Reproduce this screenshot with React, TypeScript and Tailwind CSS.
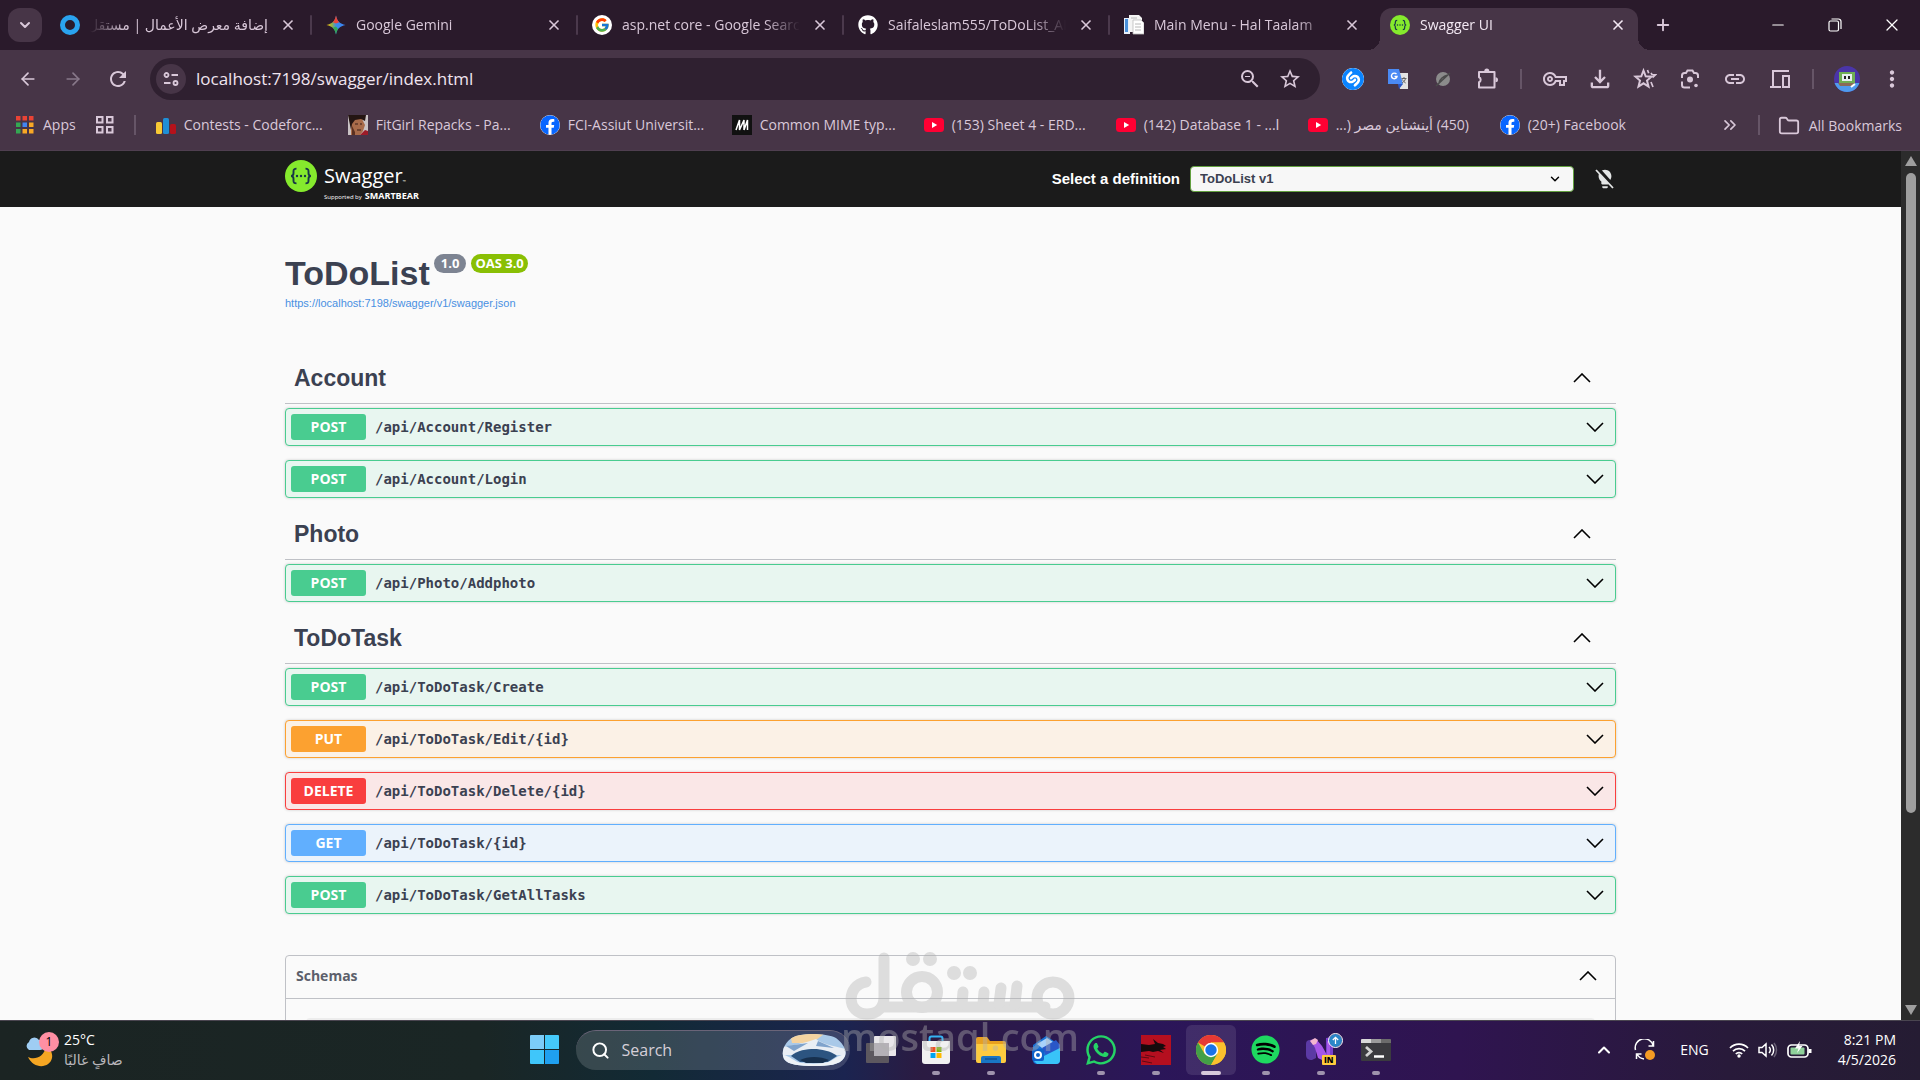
import React from 'react';
import { ArrowLeft, ArrowRight, ChevronDown, ChevronUp, ChevronsRight, Folder, Minus, Plus, Search, X } from 'lucide-react';
import { FcGoogle } from 'react-icons/fc';
import { FaFacebook, FaGithub, FaSpotify, FaWhatsapp } from 'react-icons/fa';
import { SiShazam } from 'react-icons/si';
import {
  MdLightbulb, MdMoreVert, MdOutlineFileDownload, MdOutlineVpnKey,
  MdLink, MdRefresh, MdStarBorder, MdZoomOut
} from 'react-icons/md';
import { clsx } from 'clsx';

type Method = 'POST' | 'PUT' | 'DELETE' | 'GET';

const SwaggerMark = ({ className }: { className: string }) => (
  <svg viewBox="0 0 32 32" className={className}>
    <circle cx="16" cy="16" r="16" fill="#85ea2d" />
    <g fill="none" stroke="#173647" strokeWidth="1.9">
      <path d="M11.5 8.6c-2.6 0-3 .8-3 2.600v2c0 1.700-.6 2.500-2.300 2.800 1.700.3 2.300 1.100 2.300 2.800v2c0 1.800.4 2.600 3 2.600" />
      <path d="M20.500 8.600c2.600 0 3 .8 3 2.600v2c0 1.700.6 2.500 2.300 2.800-1.700.3-2.300 1.100-2.300 2.800v2c0 1.800-.4 2.600-3 2.600" />
    </g>
    <g fill="#173647">
      <circle cx="12" cy="16" r="1.200" />
      <circle cx="16" cy="16" r="1.200" />
      <circle cx="20" cy="16" r="1.200" />
    </g>
  </svg>
);

const Arrow = ({ up, className }: { up?: boolean; className?: string }) => (
  <svg viewBox="0 0 18 10" className={clsx('h-[10px] w-[18px] text-black', className)} fill="none" stroke="currentColor" strokeWidth="1.600">
    <path d={up ? 'M1 9l8-8 8 8' : 'M1 1l8 8 8-8'} />
  </svg>
);

const GeminiIcon = () => (
  <svg viewBox="0 0 20 20" className="size-5">
    <defs>
      <linearGradient id="gem" x1="0" y1="0" x2="1" y2="0">
        <stop offset="0" stopColor="#fbbc04" />
        <stop offset="0.300" stopColor="#8fb04a" />
        <stop offset="0.500" stopColor="#3b8be8" />
        <stop offset="1" stopColor="#3b82f6" />
      </linearGradient>
    </defs>
    <path d="M10 .5c1 5.500 4 8.500 9.500 9.500-5.500 1-8.500 4-9.500 9.500C9 14 6 11 .5 10 6 9 9 6 10 .5z" fill="url(#gem)" />
    <path d="M10 .5c.6 3 1.600 5.200 3.200 6.700L10 8.500 6.800 7.200C8.400 5.700 9.400 3.500 10 .5z" fill="#ea4335" />
    <path d="M10 19.500c-.6-3-1.600-5.200-3.200-6.700L10 11.500l2 2.500c-1 1.500-1.600 3.300-2 5.500z" fill="#34a853" />
  </svg>
);

const PagesIcon = () => (
  <svg viewBox="0 0 20 20" className="size-5">
    <path d="M0 3h6v16H0z" fill="#e8f0fa" />
    <path d="M1 4h3v13H1z" fill="#4a90d9" />
    <path d="M5 0h10l3 3v14H5z" fill="#f4f4f4" />
    <path d="M9 5h8l3 3v11H9z" fill="#fff" stroke="#bbb" strokeWidth="0.800" />
    <path d="M7 3h6M11 9h6M11 12h6M11 15h6" stroke="#b8b8b8" />
  </svg>
);

const YoutubeIcon = () => (
  <svg viewBox="0 0 20 20" className="size-5">
    <rect y="3" width="20" height="14" rx="3.500" fill="#ff0033" />
    <path d="M8 7l5.200 3L8 13z" fill="#fff" />
  </svg>
);

const CodeforcesIcon = () => (
  <svg viewBox="0 0 20 20" className="size-5">
    <rect x="0" y="7" width="6" height="12" rx="1.500" fill="#f8c934" />
    <rect x="7" y="3" width="6" height="16" rx="1.500" fill="#1f8fd6" />
    <rect x="14" y="9" width="6" height="10" rx="1.500" fill="#b5121b" />
  </svg>
);

const PortraitIcon = () => (
  <svg viewBox="0 0 20 20" className="size-5">
    <rect width="20" height="20" fill="#c9c2c4" />
    <path d="M3 20V8l4-5 7 1 3 6-2 6-3 4z" fill="#a86b4a" />
    <path d="M0 0h18l-1 6-4-2-6 1-3 4-1 6z" fill="#241512" />
    <path d="M7 9h3M12 9h2M9 15h4" stroke="#3b1e16" />
    <path d="M4 20V11l3 6v3z" fill="#5b3020" />
    <path d="M12 20l5-5 3 1v4z" fill="#9c1c28" />
  </svg>
);

const MdnIcon = () => (
  <svg viewBox="0 0 20 20" className="size-5">
    <rect width="20" height="20" fill="#111" />
    <path d="M4 15L7.500 5v10L12 5v10M12 15l3.500-10v10" fill="none" stroke="#fff" strokeWidth="1.500" />
  </svg>
);

const AppsIcon = () => (
  <svg viewBox="0 0 18 18" className="size-[18px]">
    {['#ea4335', '#ea4335', '#ea4335', '#34a853', '#4285f4', '#f9a825', '#34a853', '#f9a825', '#f9a825'].map((c, i) => (
      <rect key={i} x={(i % 3) * 6.5} y={Math.floor(i / 3) * 6.5} width="4.500" height="4.500" fill={c} />
    ))}
  </svg>
);

const TranslateIcon = () => (
  <svg viewBox="0 0 22 22" className="size-[22px]">
    <path d="M9 5h12v16H13z" fill="#e3e3e3" />
    <path d="M1 1h11l4 15H1z" fill="#4a8af4" />
    <path d="M12 21l4-5h-5z" fill="#2a56c6" />
    <path d="M9.500 6.200A2.800 2.800 0 1 0 10 8.500H7.500" fill="none" stroke="#fff" strokeWidth="1.400" />
    <path d="M14.500 10.500h5M17 9v1.500M18.500 10.500c-.5 2-1.500 3.500-3.500 4.500M15.500 11.500c.6 1.500 1.600 2.700 3.200 3.500" fill="none" stroke="#666" />
  </svg>
);

const PlanetIcon = () => (
  <svg viewBox="0 0 16 16" className="size-4">
    <circle cx="8" cy="8" r="7" fill="#8b8b8b" />
    <path d="M1 15L15 2M4 12c1-4 5-7 9-8" fill="none" stroke="#4a4a4a" strokeWidth="1.500" />
  </svg>
);

const PuzzleIcon = () => (
  <svg viewBox="0 0 24 24" className="size-6" fill="none" stroke="currentColor" strokeWidth="2">
    <path d="M3 5h15.500v15.500H3v-5.300a2.700 2.700 0 0 0 0-5z" strokeLinejoin="round" />
    <path d="M8.300 4a2.500 2.500 0 0 1 5 0zM19.500 10.300a2.500 2.500 0 0 1 0 5z" fill="currentColor" stroke="none" />
  </svg>
);

const StarsIcon = () => (
  <svg viewBox="0 0 24 24" className="size-6" fill="none" stroke="currentColor" strokeWidth="2">
    <path d="M10.500 3.500l2.200 5.800 5.800.4-4.500 3.900 1.500 6-5-3.300-5 3.300 1.500-6-4.500-3.900 5.800-.4z" />
    <path d="M14.500 3l1.200 3.200M18 6l1 1.500 3.500.3-3 2.700M18 15l2 5" strokeWidth="1.700" />
  </svg>
);

const LensIcon = () => (
  <svg viewBox="0 0 24 24" className="size-6" fill="none" stroke="currentColor" strokeWidth="2">
    <path d="M4 11V8.500A2.500 2.500 0 0 1 6.500 6H8l1.500-2.500h5L16 6h1.500A2.500 2.500 0 0 1 20 8.500V11M4 14.500V18a2.500 2.500 0 0 0 2.500 2.500H12" />
    <circle cx="12" cy="12.500" r="3" fill="currentColor" stroke="none" />
    <circle cx="18" cy="18.500" r="1.800" fill="currentColor" stroke="none" />
  </svg>
);

const DevicesIcon = () => (
  <svg viewBox="0 0 24 24" className="size-6" fill="none" stroke="currentColor" strokeWidth="2">
    <path d="M21 4H5v15M2 20h11" />
    <rect x="15" y="9" width="6" height="11" />
  </svg>
);

const AvatarIcon = () => (
  <svg viewBox="0 0 26 26" className="size-[26px]">
    <defs>
      <clipPath id="av"><circle cx="13" cy="13" r="13" /></clipPath>
    </defs>
    <g clipPath="url(#av)">
      <rect width="26" height="26" fill="#4a35a8" />
      <path d="M0 17h26v9H0z" fill="#4f9bee" />
      <path d="M5 6h16v11H5z" fill="#6fae55" />
      <path d="M8 8h10v7H8z" fill="#e6eef0" />
      <path d="M10 10h2v3h-2zM14 10h2v3h-2z" fill="#222" />
      <path d="M4 17h17l-2 3H6z" fill="#8a6b58" />
      <path d="M17 21l4-3" stroke="#fff" strokeWidth="2" />
    </g>
  </svg>
);

const tabs = [
  { title: 'إضافة معرض الأعمال | مستقل', rtl: true, icon: <svg viewBox="0 0 20 20" className="size-5"><circle cx="10" cy="10" r="7.500" fill="none" stroke="#2aa3ef" strokeWidth="5" /></svg> },
  { title: 'Google Gemini', icon: <GeminiIcon /> },
  { title: 'asp.net core - Google Search', icon: <span className="flex size-5 items-center justify-center rounded-full bg-white"><FcGoogle size={16} /></span> },
  { title: 'Saifaleslam555/ToDoList_API', icon: <FaGithub size={20} className="text-white" /> },
  { title: 'Main Menu - Hal Taalam', icon: <PagesIcon /> },
  { title: 'Swagger UI', active: true, icon: <SwaggerMark className="size-5" /> },
];

const facebook = <FaFacebook size={20} className="rounded-full bg-white text-[#0866ff]" />;

const bookmarks = [
  { name: 'Contests - Codeforc...', icon: <CodeforcesIcon /> },
  { name: 'FitGirl Repacks - Pa...', icon: <PortraitIcon /> },
  { name: 'FCI-Assiut Universit...', icon: facebook },
  { name: 'Common MIME typ...', icon: <MdnIcon /> },
  { name: '(153) Sheet 4 - ERD...', icon: <YoutubeIcon /> },
  { name: '(142) Database 1 - ...ا', icon: <YoutubeIcon /> },
  { name: '(450) أينشتاين مصر (...', rtl: true, icon: <YoutubeIcon /> },
  { name: '(20+) Facebook', icon: facebook },
];

const toolbarActions = [
  { label: 'Shazam', icon: <SiShazam size={22} className="rounded-full bg-white text-[#0a84ff]" /> },
  { label: 'Translate', icon: <TranslateIcon /> },
  { label: 'Proxy', icon: <PlanetIcon /> },
  { label: 'Extensions', icon: <PuzzleIcon /> },
];

const toolbarShortcuts = [
  { label: 'Passwords', icon: <MdOutlineVpnKey size={24} /> },
  { label: 'Downloads', icon: <MdOutlineFileDownload size={28} /> },
  { label: 'Bookmarks', icon: <StarsIcon /> },
  { label: 'Lens', icon: <LensIcon /> },
  { label: 'Copy link', icon: <MdLink size={24} /> },
  { label: 'Send to devices', icon: <DevicesIcon /> },
];

const sections: { name: string; operations: { method: Method; path: string }[] }[] = [
  {
    name: 'Account',
    operations: [
      { method: 'POST', path: '/api/Account/Register' },
      { method: 'POST', path: '/api/Account/Login' },
    ],
  },
  { name: 'Photo', operations: [{ method: 'POST', path: '/api/Photo/Addphoto' }] },
  {
    name: 'ToDoTask',
    operations: [
      { method: 'POST', path: '/api/ToDoTask/Create' },
      { method: 'PUT', path: '/api/ToDoTask/Edit/{id}' },
      { method: 'DELETE', path: '/api/ToDoTask/Delete/{id}' },
      { method: 'GET', path: '/api/ToDoTask/{id}' },
      { method: 'POST', path: '/api/ToDoTask/GetAllTasks' },
    ],
  },
];

const methodStyles: Record<Method, { row: string; badge: string }> = {
  POST: { row: 'border-[#49cc90] bg-[#e8f6f0]', badge: 'bg-[#49cc90]' },
  PUT: { row: 'border-[#fca130] bg-[#fbf1e6]', badge: 'bg-[#fca130]' },
  DELETE: { row: 'border-[#f93e3e] bg-[#fae7e7]', badge: 'bg-[#f93e3e]' },
  GET: { row: 'border-[#61affe] bg-[#ebf3fb]', badge: 'bg-[#61affe]' },
};

function TabStrip() {
  return (
    <div className="flex h-[50px] shrink-0 bg-[#2a1a2b] pl-2 text-[#d9c8d9]">
      <button aria-label="Search tabs" className="mt-2 mr-1 flex size-[34px] shrink-0 items-center justify-center rounded-xl bg-[#473547]">
        <ChevronDown size={16} strokeWidth={3} />
      </button>
      {tabs.map((tab, i) => (
        <div key={tab.title} className="relative flex min-w-0 max-w-[266px] flex-1 pt-2">
          {tab.active && (
            <>
              <span className="absolute bottom-0 -left-2 size-3 bg-[radial-gradient(circle_at_0_0,transparent_12px,#473547_12px)]" />
              <span className="absolute -right-2 bottom-0 size-3 bg-[radial-gradient(circle_at_100%_0,transparent_12px,#473547_12px)]" />
            </>
          )}
          <div
            className={clsx(
              'flex min-w-0 flex-1 items-center pb-2',
              tab.active && 'mx-1 rounded-t-xl bg-[#473547] pr-3 pl-[10px] text-[#f3e8f3]',
              !tab.active && 'pr-4 pl-[14px]'
            )}
          >
            <span className="shrink-0">{tab.icon}</span>
            <span
              dir={tab.rtl ? 'rtl' : 'ltr'}
              className={clsx(
                'ml-[10px] min-w-0 flex-1 overflow-hidden text-sm whitespace-nowrap',
                tab.rtl ? '[mask-image:linear-gradient(to_left,black_80%,transparent)]' : '[mask-image:linear-gradient(to_right,black_80%,transparent)]'
              )}
            >
              {tab.title}
            </span>
            <button aria-label={'Close ' + tab.title} className="ml-3 shrink-0">
              <X size={16} strokeWidth={2.500} />
            </button>
          </div>
          {i < tabs.length - 2 && <span className="absolute top-[15px] right-0 h-5 w-[2px] rounded bg-[#4b394c]" />}
        </div>
      ))}
      <button aria-label="New tab" className="ml-3"><Plus size={18} strokeWidth={2.500} /></button>
      <div className="ml-auto flex text-white">
        <button aria-label="Minimize" className="flex w-[57px] items-center justify-center"><Minus size={18} strokeWidth={1.500} /></button>
        <button aria-label="Restore" className="flex w-[57px] items-center justify-center">
          <svg viewBox="0 0 14 14" className="size-[14px]" fill="none" stroke="currentColor" strokeWidth="1.200">
            <rect x="1" y="3" width="9.500" height="10" rx="1.500" />
            <path d="M3.500 1h7a2.500 2.500 0 0 1 2.500 2.500V11" />
          </svg>
        </button>
        <button aria-label="Close window" className="flex w-[57px] items-center justify-center"><X size={20} strokeWidth={1.500} /></button>
      </div>
    </div>
  );
}

function Toolbar() {
  return (
    <div className="flex h-[58px] shrink-0 items-center bg-[#473547] pr-[6px] pl-[5px] text-[#d9c8d9]">
      <button aria-label="Back" className="flex w-[45px] justify-center"><ArrowLeft size={20} /></button>
      <button aria-label="Forward" className="flex w-[45px] justify-center text-[#88788a]"><ArrowRight size={20} /></button>
      <button aria-label="Reload" className="flex w-[45px] justify-center"><MdRefresh size={24} /></button>
      <div className="ml-[10px] flex h-[42px] min-w-0 flex-1 items-center rounded-full bg-[#2f2030] pr-[18px] pl-[6px]">
        <button aria-label="Site information" className="flex size-[30px] shrink-0 items-center justify-center rounded-full bg-[#473547]">
          <svg viewBox="0 0 16 16" className="size-4" fill="none" stroke="currentColor" strokeWidth="1.800">
            <circle cx="3.500" cy="4" r="2" />
            <path d="M8.500 4H15M1 12h6.500" />
            <circle cx="12.500" cy="12" r="2" />
          </svg>
        </button>
        <input aria-label="Address" defaultValue="localhost:7198/swagger/index.html" className="ml-[10px] min-w-0 flex-1 bg-transparent text-[17px] text-[#efe4ef] outline-none" />
        <button aria-label="Zoom" className="ml-3"><MdZoomOut size={24} /></button>
        <button aria-label="Bookmark this tab" className="ml-4"><MdStarBorder size={24} /></button>
      </div>
      <div className="ml-[10px] flex items-center">
        {toolbarActions.map((a) => (
          <button key={a.label} aria-label={a.label} className="flex w-[45px] justify-center">{a.icon}</button>
        ))}
        <span className="mx-[10px] h-5 w-[2px] bg-[#665567]" />
        {toolbarShortcuts.map((a) => (
          <button key={a.label} aria-label={a.label} className="flex w-[45px] justify-center">{a.icon}</button>
        ))}
        <span className="mx-[10px] h-5 w-[2px] bg-[#665567]" />
        <button aria-label="Profile" className="flex w-[45px] justify-center"><AvatarIcon /></button>
        <button aria-label="Menu" className="flex w-[45px] justify-center"><MdMoreVert size={26} /></button>
      </div>
    </div>
  );
}

function BookmarksBar() {
  return (
    <div className="flex h-[43px] shrink-0 items-start border-b border-[#4f3f50] bg-[#473547] pt-[7px] pr-[18px] pl-4 text-sm leading-5 text-[#d9c8d9]">
      <a href="#apps" className="flex shrink-0 items-center gap-[9px]"><AppsIcon />Apps</a>
      <button aria-label="Tab groups" className="ml-5 flex h-5 items-center">
        <svg viewBox="0 0 18 18" className="size-[18px]" fill="none" stroke="currentColor" strokeWidth="2">
          <rect x="1" y="1" width="5.500" height="5.500" />
          <rect x="11" y="1" width="5.500" height="5.500" />
          <rect x="1" y="11" width="5.500" height="5.500" />
          <rect x="11" y="11" width="5.500" height="5.500" />
        </svg>
      </button>
      <span className="mx-5 h-5 w-[2px] shrink-0 bg-[#665567]" />
      <div className="flex min-w-0 flex-1 overflow-hidden">
        {bookmarks.map((b) => (
          <a key={b.name} href="#bookmark" className="flex w-48 shrink-0 items-center gap-2 whitespace-nowrap">
            <span className="shrink-0">{b.icon}</span>
            <span dir={b.rtl ? 'rtl' : 'ltr'}>{b.name}</span>
          </a>
        ))}
      </div>
      <button aria-label="More bookmarks"><ChevronsRight size={20} /></button>
      <span className="mx-[18px] h-5 w-[2px] bg-[#665567]" />
      <button className="flex items-center gap-[9px] whitespace-nowrap"><Folder size={22} />All Bookmarks</button>
    </div>
  );
}

function SwaggerHeader() {
  return (
    <header className="h-14 bg-[#1b1b1b] font-['Liberation_Sans',Arial,sans-serif]">
      <div className="mx-auto flex h-full max-w-[1331px] items-start pt-[9px]">
        <a href="#home" aria-label="Swagger" className="flex gap-[7px] font-['Open_Sans',sans-serif] text-white">
          <SwaggerMark className="size-8" />
          <span className="flex flex-col pt-2">
            <span className="text-xl leading-4">Swagger<span className="text-[4px]">™</span></span>
            <span className="flex items-baseline gap-[3px] text-[6px] leading-3 whitespace-nowrap">Supported by <b className="text-[9px]">SMARTBEAR</b></span>
          </span>
        </a>
        <div className="ml-auto flex items-center pt-[6px]">
          <label htmlFor="definition" className="mr-[10px] text-[15px] font-bold text-white">Select a definition</label>
          <div className="relative flex">
            <select id="definition" className="h-[26px] w-[384px] appearance-none rounded border border-[#62a03f] bg-[#f7f7f7] pl-[9px] text-[13px] font-bold text-[#3b4151]">
              <option>ToDoList v1</option>
            </select>
            <ChevronDown size={14} strokeWidth={2.500} className="pointer-events-none absolute top-[6px] right-3 text-black" />
          </div>
          <button aria-label="Toggle dark mode" className="relative ml-5 text-[#e4e6e6]">
            <MdLightbulb size={22} />
            <svg viewBox="0 0 22 22" className="absolute inset-0 size-[22px]">
              <path d="M4 1l16 18" stroke="#1b1b1b" strokeWidth="4" />
              <path d="M2 2l17 18" stroke="#e4e6e6" strokeWidth="1.800" />
            </svg>
          </button>
        </div>
      </div>
    </header>
  );
}

function Operation({ method, path }: { method: Method; path: string }) {
  const styles = methodStyles[method];
  return (
    <button className={clsx('flex h-[38px] w-full items-center rounded border pr-[11px] pl-[5px] shadow-[0_0_3px_rgba(0,0,0,0.19)]', styles.row)}>
      <span className={clsx("w-[75px] rounded-[3px] text-center font-['Open_Sans',sans-serif] text-sm leading-[26px] font-bold text-white", styles.badge)}>{method}</span>
      <span className="ml-[9px] font-['DejaVu_Sans_Mono',monospace] text-sm font-bold text-[#3b4151]">{path}</span>
      <Arrow className="ml-auto" />
    </button>
  );
}

function SwaggerPage() {
  return (
    <div className="flex min-h-0 flex-1 overflow-hidden bg-[#fafafa]">
      <div className="min-w-0 flex-1 font-['Liberation_Sans',Arial,sans-serif] text-[#3b4151]">
        <SwaggerHeader />
        <main className="mx-auto max-w-[1331px] pt-[46px]">
          <h1 className="flex items-start text-[34px] leading-10 font-bold">
            ToDoList
            <span className="mt-[1px] ml-1 flex gap-[5px] font-['Open_Sans',sans-serif] text-[13px] leading-[19px] text-white">
              <span className="rounded-full bg-[#7d8492] px-[7px]">1.0</span>
              <span className="rounded-full bg-[#89bf04] px-1">OAS 3.0</span>
            </span>
          </h1>
          <a href="#swagger.json" className="mt-[2px] block text-[11px] leading-4 text-[#4990e2]">https://localhost:7198/swagger/v1/swagger.json</a>

          <div className="mt-[42px] flex flex-col gap-[11px]">
            {sections.map((section) => (
              <section key={section.name}>
                <h2 className="mb-1 flex h-[51px] items-center justify-between border-b border-[#bfc1c6] pr-[25px] pl-[9px] text-[23px] font-bold">
                  {section.name}
                  <button aria-label={'Collapse ' + section.name}><Arrow up className="block" /></button>
                </h2>
                <div className="flex flex-col gap-[14px]">
                  {section.operations.map((op) => <Operation key={op.path} {...op} />)}
                </div>
              </section>
            ))}
          </div>

          <section className="mt-[41px] rounded border border-[#bfc1c6]">
            <h2 className="flex h-[43px] items-center justify-between border-b border-[#bfc1c6] pr-[18px] pb-[2px] pl-[10px] font-['Open_Sans',sans-serif] text-sm font-bold text-[#5c5f6b]">
              Schemas
              <button aria-label="Collapse schemas"><Arrow up className="block" /></button>
            </h2>
            <div className="mx-5 my-[19px] h-10 rounded bg-[#ededed]" />
          </section>
        </main>
      </div>
      {/* Scrollbar */}
      <div className="flex w-[19px] flex-col items-center bg-[#2c2c2c] py-[5px]">
        <svg viewBox="0 0 12 10" className="h-[10px] w-3"><path d="M6 0l6 10H0z" fill="#9f9f9f" /></svg>
        <div className="mt-[7px] h-[640px] w-[10px] rounded-full bg-[#9f9f9f]" />
        <svg viewBox="0 0 12 10" className="mt-auto h-[10px] w-3"><path d="M0 0h12L6 10z" fill="#9f9f9f" /></svg>
      </div>
    </div>
  );
}

const ChromeIcon = () => (
  <svg viewBox="0 0 30 30" className="size-[30px]">
    <circle cx="15" cy="15" r="15" fill="#fbc02d" />
    <path d="M15 15L2 7.500A15 15 0 0 1 28 7.500H15z" fill="#e53935" />
    <path d="M2 7.500A15 15 0 0 0 15 30l6.500-11.200L15 15 8.500 18.800z" fill="#43a047" />
    <path d="M28 7.500H15l6.500 11.300L15 30A15 15 0 0 0 28 7.500z" fill="#fbc02d" />
    <circle cx="15" cy="15" r="7.200" fill="#fff" />
    <circle cx="15" cy="15" r="5.700" fill="#1a73e8" />
  </svg>
);

const taskbarApps = [
  {
    name: 'Task view',
    icon: (
      <svg viewBox="0 0 30 30" className="size-[30px]">
        <rect x="0" y="8" width="23" height="20" rx="1" fill="#5d585f" />
        <rect x="8" y="1" width="22" height="20" rx="1" fill="#e9e7ea" />
        <rect x="8" y="8" width="15" height="13" fill="#b5b1b7" />
      </svg>
    ),
  },
  {
    name: 'Microsoft Store',
    running: true,
    icon: (
      <svg viewBox="0 0 30 30" className="size-[30px]">
        <path d="M8.500 7V3.500a2 2 0 0 1 2-2h9a2 2 0 0 1 2 2V7" fill="none" stroke="#35b2f2" strokeWidth="2" />
        <path d="M1 6h28v20a3 3 0 0 1-3 3H4a3 3 0 0 1-3-3z" fill="#f1f1f1" />
        <path d="M9.500 12h5v5h-5z" fill="#f25022" />
        <path d="M15.500 12h5v5h-5z" fill="#7fba00" />
        <path d="M9.500 18h5v5h-5z" fill="#00a4ef" />
        <path d="M15.500 18h5v5h-5z" fill="#ffb900" />
      </svg>
    ),
  },
  {
    name: 'File Explorer',
    running: true,
    icon: (
      <svg viewBox="0 0 30 30" className="size-[30px]">
        <path d="M0 4a2 2 0 0 1 2-2h9l3 4h14a2 2 0 0 1 2 2v6H0z" fill="#e8a020" />
        <path d="M0 9h30v17a2 2 0 0 1-2 2H2a2 2 0 0 1-2-2z" fill="#fdcb3f" />
        <path d="M5 28v-5a2 2 0 0 1 2-2h16a2 2 0 0 1 2 2v5z" fill="#1976c5" />
        <path d="M9 24h12" stroke="#0f5595" strokeWidth="1.500" />
      </svg>
    ),
  },
  {
    name: 'Outlook',
    icon: (
      <svg viewBox="0 0 30 30" className="size-[30px]">
        <path d="M2 10L15 1l14 9v15a4 4 0 0 1-4 4H6a4 4 0 0 1-4-4z" fill="#1671d6" />
        <path d="M6 9l10-6 9 6-9 8z" fill="#a9d3fb" />
        <path d="M11 13l14-8 4 5v3L15 20z" fill="#2957c8" />
        <path d="M3 26l26-13v12a4 4 0 0 1-4 4H6z" fill="#39c3f8" />
        <rect x="1" y="14" width="12" height="12" rx="2" fill="#0f62c9" />
        <circle cx="7" cy="20" r="3" fill="none" stroke="#fff" strokeWidth="2" />
      </svg>
    ),
  },
  { name: 'WhatsApp', running: true, icon: <FaWhatsapp size={34} className="text-[#25d366]" /> },
  {
    name: 'Game',
    running: true,
    icon: (
      <svg viewBox="0 0 30 30" className="size-[30px]">
        <rect width="30" height="30" fill="#b50f1f" />
        <path d="M0 9l8 1 6-1-2-5 5 4 5 1 3 2-3 1 3 2-6 1 4 3-6-2-5 1-4-1-8 1z" fill="#170a0c" />
        <path d="M0 22l8 1M1 26l10 2M4 20l10 2" stroke="#5e0912" />
      </svg>
    ),
  },
  { name: 'Chrome', running: true, active: true, icon: <ChromeIcon /> },
  { name: 'Spotify', running: true, icon: <span className="flex size-[26px] items-center justify-center rounded-full bg-black"><FaSpotify size={29} className="shrink-0 text-[#1ed760]" /></span> },
  {
    name: 'Visual Studio',
    running: true,
    icon: (
      <span className="relative flex">
        <svg viewBox="0 0 30 30" className="size-[30px]">
          <path d="M20 3l7-1v20l-7 3z" fill="#7a3fce" />
          <path d="M0 9a4 4 0 0 1 4-4l6 9v9l-4 2c-4 0-6-2-6-5z" fill="#5b3aa5" />
          <path d="M4 5l6-1 6 7 5 9V6l3 2v14l-6 4-6-3L9 13z" fill="#a657e8" />
          <path d="M4 6l5-3 3 2-2 4-3 1z" fill="#f3b6cf" />
        </svg>
        <span className="absolute -top-px -right-[6px] flex size-[13px] items-center justify-center rounded-full bg-[#2b87c8] outline-1 outline-white">
          <svg viewBox="0 0 10 10" className="size-[9px]" fill="none" stroke="#fff" strokeWidth="1.400"><path d="M5 9V1.500M2 4.500l3-3 3 3" /></svg>
        </span>
        <span className="absolute right-0 bottom-0 rounded-[1px] bg-[#ffcb3d] px-[2px] text-[8px] leading-[10px] font-extrabold text-black">IN</span>
      </span>
    ),
  },
  {
    name: 'Terminal',
    running: true,
    icon: (
      <svg viewBox="0 0 30 30" className="size-[30px]">
        <rect y="4" width="30" height="22" rx="1" fill="#3b3b3f" />
        <path d="M0 5a1 1 0 0 1 1-1h9v4H0z" fill="#d9d9d9" />
        <path d="M10 4h10v4H10z" fill="#9b9b9b" />
        <path d="M20 4h9a1 1 0 0 1 1 1v3H20z" fill="#6b6b6b" />
        <path d="M5 12l5 4.500L5 21" fill="none" stroke="#d2d2d2" strokeWidth="2.800" />
        <path d="M13 21.500h10" stroke="#fff" strokeWidth="2.500" />
      </svg>
    ),
  },
];

function Taskbar() {
  return (
    <footer className="grid h-[60px] shrink-0 grid-cols-[1fr_auto_1fr] items-center border-t border-[#4a4550] bg-[linear-gradient(90deg,#1b2423_0%,#1a2625_25%,#122a35_34%,#1b2450_44%,#2b1b42_48%,#2b1659_60%,#2f1450_76%,#281a3a_90%,#251c33_100%)] pb-[2px] text-white">
      <button className="flex items-center justify-self-start pl-[25px] text-left">
        <span className="relative flex">
          <svg viewBox="0 0 34 36" className="h-9 w-[34px]">
            <path d="M3 25c6 3 16 1 18-11 4 2 7 7 6 12-2 10-18 12-24-1z" fill="#f5a623" />
            <path d="M4 18a4.500 4.500 0 0 1 0-8 5.500 5.500 0 0 1 10-2c4-1 6 3 5 6s-2 4-4 4z" fill="#9fcdf3" />
          </svg>
          <span className="absolute top-0 left-[14px] size-5 rounded-full bg-[#ff8fa3] text-center text-xs leading-5 text-black">1</span>
        </span>
        <span className="ml-[5px] flex flex-col text-sm leading-5">
          25°C
          <span dir="rtl" className="text-[#b9b7bb]">صافٍ غالبًا</span>
        </span>
      </button>

      <div className="flex items-center">
        <button aria-label="Start" className="mr-[6px] flex w-[50px] justify-center">
          <svg viewBox="0 0 29 29" className="size-[29px]">
            <path d="M0 1a1 1 0 0 1 1-1h13v14H0z" fill="#7ccdf8" />
            <path d="M15 0h13a1 1 0 0 1 1 1v13H15z" fill="#45cafa" />
            <path d="M0 15h14v14H1a1 1 0 0 1-1-1z" fill="#3fc6fa" />
            <path d="M15 15h14v13a1 1 0 0 1-1 1H15z" fill="#1fa0f0" />
          </svg>
        </button>
        <div className="mr-[6px] flex h-10 w-[274px] items-center rounded-full border-t border-[#6a6478] bg-white/15 pr-1 pl-[15px]">
          <Search size={19} strokeWidth={2.500} className="shrink-0" />
          <input aria-label="Search" placeholder="Search" className="ml-3 min-w-0 flex-1 bg-transparent text-base outline-none placeholder:text-[#d5cfd8]" />
          <svg viewBox="0 0 64 32" className="h-8 w-16 shrink-0">
            <defs>
              <clipPath id="pic"><path d="M14 2C24-1 44-1 54 4c8 6 12 14 8 20-4 7-16 8-30 8S6 31 2 25C-2 17 4 5 14 2z" /></clipPath>
            </defs>
            <g clipPath="url(#pic)">
              <rect width="64" height="32" fill="#a9c9e8" />
              <path d="M8 0h34l-12 9H10z" fill="#f4d3a0" />
              <path d="M0 13c14-2 22-4 34-8 6 5 14 6 30 10v6H0z" fill="#e9eef4" />
              <path d="M4 12l22-3-14 8zM36 7l16 7-18-2z" fill="#7fa3cc" />
              <path d="M9 22c6-6 16-7 23-7s17 2 23 7l-9 6H18z" fill="#2c5480" />
              <path d="M18 26c8-4 20-4 29 0l-6 3H24z" fill="#17304e" />
              <path d="M0 21c6-1 12 7 20 8s20 1 26-1 12-9 18-7v11H0z" fill="#eef2f6" />
            </g>
          </svg>
        </div>
        <div className="flex gap-[5px]">
          {taskbarApps.map((app) => (
            <button
              key={app.name}
              aria-label={app.name}
              className={clsx('relative flex size-[50px] items-center justify-center rounded-md', app.active && 'bg-white/10')}
            >
              {app.icon}
              {app.running && (
                <span className={clsx('absolute bottom-0 h-1 rounded-full', app.active ? 'w-5 bg-[#d7c8dc]' : 'w-2 bg-[#9f93ad]')} />
              )}
            </button>
          ))}
        </div>
      </div>

      <div className="flex items-center justify-self-end pr-6 text-sm">
        <button aria-label="Hidden icons"><ChevronUp size={20} strokeWidth={2.500} /></button>
        <button aria-label="Updates" className="ml-5">
          <svg viewBox="0 0 22 22" className="block size-[22px]" fill="none" stroke="currentColor" strokeWidth="1.500">
            <path d="M1.500 11A9 9 0 0 1 19 6.500M19.500 2v5h-5M2.500 20v-5h5M3 15a9 9 0 0 0 7 5" />
            <circle cx="16" cy="16" r="5" fill="#f59b23" stroke="none" />
          </svg>
        </button>
        <button className="mr-5 ml-6">ENG</button>
        <button aria-label="Network, volume and battery" className="flex items-center gap-[9px]">
          <svg viewBox="0 0 20 16" className="h-4 w-5" fill="none" stroke="currentColor" strokeWidth="1.700">
            <path d="M1 6a12.500 12.500 0 0 1 18 0M4 9.200a8.300 8.300 0 0 1 12 0M6.800 12a4.500 4.500 0 0 1 6.400 0" />
            <circle cx="10" cy="14" r="1.700" fill="currentColor" stroke="none" />
          </svg>
          <svg viewBox="0 0 20 16" className="h-4 w-5" fill="none" stroke="currentColor" strokeWidth="1.500">
            <path d="M1 5.500h3L8 2v12l-4-3.500H1zM11 5a4 4 0 0 1 0 6M13.500 2.500a8 8 0 0 1 0 11" />
            <path d="M16 1a11 11 0 0 1 0 14" opacity="0.300" />
          </svg>
          <svg viewBox="0 0 25 18" className="h-[18px] w-[25px]" fill="none" stroke="currentColor" strokeWidth="1.700">
            <rect x="1" y="4" width="20" height="12" rx="3.500" />
            <rect x="3.500" y="6.500" width="14" height="7" rx="1" fill="#8fd19a" stroke="none" />
            <path d="M23 8v4" strokeWidth="3" />
            <path d="M13 0L8 7.500h3.500L10 12l5.500-7H12z" fill="#fff" stroke="none" />
          </svg>
        </button>
        <div className="ml-[26px] text-right leading-5">
          <div>8:21 PM</div>
          <div>4/5/2026</div>
        </div>
      </div>
    </footer>
  );
}

// Overlay brand, sits across the page and the taskbar
const Watermark = () => (
  <div className="pointer-events-none absolute bottom-[27px] left-1/2 flex -translate-x-1/2 flex-col items-center text-[#b2b2b2] opacity-40">
    <svg viewBox="845 951 230 69" className="h-[69px] w-[230px]" fill="none" stroke="currentColor" strokeWidth="11" strokeLinecap="round">
      <path d="M866 982C846 985 846 1014 867 1014C878 1014 884 1007 884 997V958M884 1007H1045" />
      <circle cx="922" cy="992" r="15.500" />
      <path d="M962 1004l1-12M983 1004l1-12M999 1004l2-16M1015 1004l2-18" />
      <circle cx="1053" cy="998" r="16" />
      <g fill="currentColor" stroke="none">
        <circle cx="913" cy="959" r="7" />
        <circle cx="930" cy="959" r="7" />
        <circle cx="954" cy="973" r="7" />
        <circle cx="970" cy="973" r="7" />
      </g>
    </svg>
    <span className="font-['Open_Sans',sans-serif] text-[38px] leading-[33px] font-semibold">mostaql.com</span>
  </div>
);

export default function App() {
  return (
    <div className="relative flex h-screen flex-col overflow-hidden font-['Open_Sans','Noto_Sans','DejaVu_Sans',sans-serif]">
      <TabStrip />
      <Toolbar />
      <BookmarksBar />
      <SwaggerPage />
      <Taskbar />
      <Watermark />
    </div>
  );
}
